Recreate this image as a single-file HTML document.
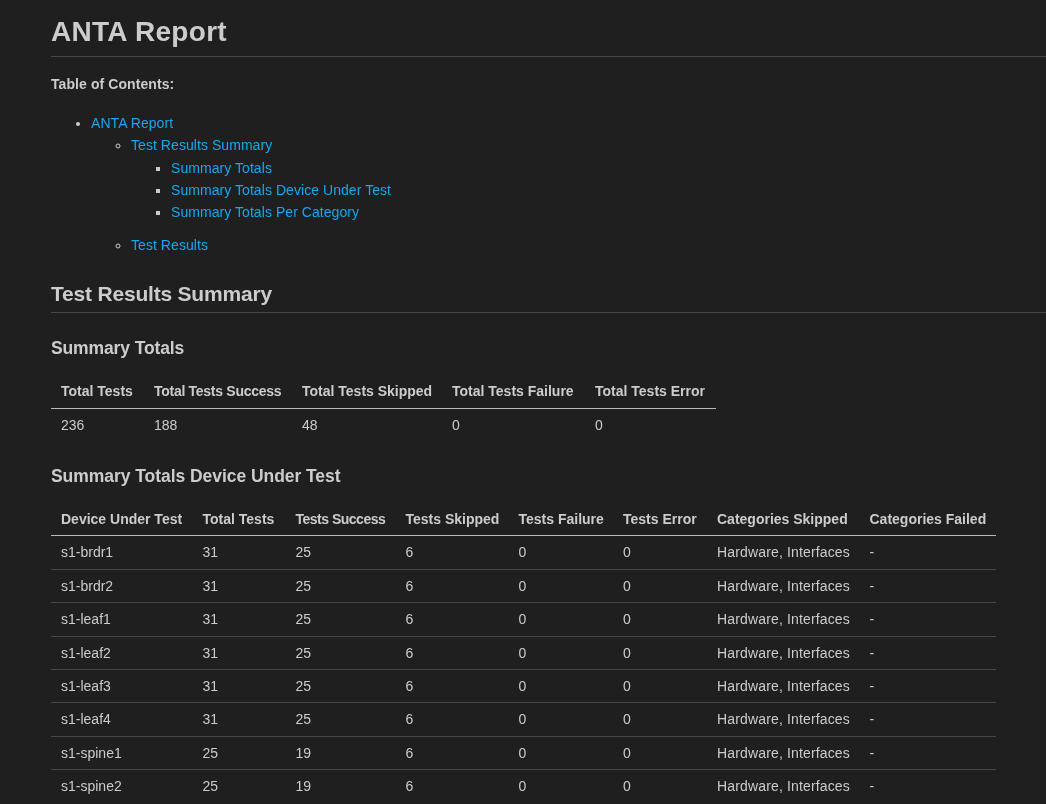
<!DOCTYPE html>
<html>
<head>
<meta charset="utf-8">
<style>
html, body {
  margin: 0;
  padding: 0;
  background: #1f1f1f;
  color: #cccccc;
  font-family: "Liberation Sans", sans-serif;
  font-size: 14px;
  line-height: 1.6;
  overflow: hidden;
}
body { padding: 13px 0 0 51px; width: 1100px; }
.wrap { will-change: transform; }
.sh { position: relative; top: 1px; }
h1, h2, h3, p, ul, pre { margin-top: 0; }
h1, h2, h3 { font-weight: bold; margin-top: 24px; margin-bottom: 16px; line-height: 1.25; }
h1 { font-size: 28px; margin-top: 0; padding-bottom: 8.4px; border-bottom: 1px solid #474747; }
h2 { font-size: 21px; padding-bottom: 6.3px; border-bottom: 1px solid #474747; }
h3 { font-size: 17.5px; }
p { margin-bottom: 16px; }
ul { margin-bottom: 9.8px; padding-left: 40px; }
a { color: #12a9f2; text-decoration: none; letter-spacing: 0.06px; }
table { border-collapse: collapse; margin-bottom: 9.8px; table-layout: fixed; }
th { text-align: left; border-bottom: 1px solid #bababa; }
th, td { padding: 5px 10px; white-space: nowrap; }
tbody tr + tr td { border-top: 1px solid #474747; }
</style>
</head>
<body>
<div class="wrap">
<h1><span class="sh" style="letter-spacing:0.3px">ANTA Report</span></h1>
<p><strong style="letter-spacing:0.08px">Table of Contents:</strong></p>
<ul>
<li><a>ANTA Report</a>
<ul>
<li><a>Test Results Summary</a>
<ul>
<li><a>Summary Totals</a></li>
<li><a>Summary Totals Device Under Test</a></li>
<li><a>Summary Totals Per Category</a></li>
</ul>
</li>
<li><a>Test Results</a></li>
</ul>
</li>
</ul>
<h2><span class="sh" style="letter-spacing:-0.2px">Test Results Summary</span></h2>
<h3><span class="sh" style="letter-spacing:-0.12px">Summary Totals</span></h3>
<table style="width:665px">
<colgroup><col style="width:93px"><col style="width:148px"><col style="width:150px"><col style="width:143px"><col style="width:131px"></colgroup>
<thead><tr><th>Total Tests</th><th style="letter-spacing:-0.28px">Total Tests Success</th><th>Total Tests Skipped</th><th>Total Tests Failure</th><th>Total Tests Error</th></tr></thead>
<tbody><tr><td>236</td><td>188</td><td>48</td><td>0</td><td>0</td></tr></tbody>
</table>
<h3><span class="sh" style="letter-spacing:-0.05px">Summary Totals Device Under Test</span></h3>
<table style="width:945px">
<colgroup><col style="width:141.5px"><col style="width:93px"><col style="width:110px"><col style="width:113px"><col style="width:104.5px"><col style="width:94px"><col style="width:152.5px"><col style="width:136.5px"></colgroup>
<thead><tr><th>Device Under Test</th><th>Total Tests</th><th style="letter-spacing:-0.5px">Tests Success</th><th>Tests Skipped</th><th>Tests Failure</th><th>Tests Error</th><th>Categories Skipped</th><th>Categories Failed</th></tr></thead>
<tbody>
<tr><td>s1-brdr1</td><td>31</td><td>25</td><td>6</td><td>0</td><td>0</td><td style="letter-spacing:0.15px">Hardware, Interfaces</td><td>-</td></tr>
<tr><td>s1-brdr2</td><td>31</td><td>25</td><td>6</td><td>0</td><td>0</td><td style="letter-spacing:0.15px">Hardware, Interfaces</td><td>-</td></tr>
<tr><td>s1-leaf1</td><td>31</td><td>25</td><td>6</td><td>0</td><td>0</td><td style="letter-spacing:0.15px">Hardware, Interfaces</td><td>-</td></tr>
<tr><td>s1-leaf2</td><td>31</td><td>25</td><td>6</td><td>0</td><td>0</td><td style="letter-spacing:0.15px">Hardware, Interfaces</td><td>-</td></tr>
<tr><td>s1-leaf3</td><td>31</td><td>25</td><td>6</td><td>0</td><td>0</td><td style="letter-spacing:0.15px">Hardware, Interfaces</td><td>-</td></tr>
<tr><td>s1-leaf4</td><td>31</td><td>25</td><td>6</td><td>0</td><td>0</td><td style="letter-spacing:0.15px">Hardware, Interfaces</td><td>-</td></tr>
<tr><td>s1-spine1</td><td>25</td><td>19</td><td>6</td><td>0</td><td>0</td><td style="letter-spacing:0.15px">Hardware, Interfaces</td><td>-</td></tr>
<tr><td>s1-spine2</td><td>25</td><td>19</td><td>6</td><td>0</td><td>0</td><td style="letter-spacing:0.15px">Hardware, Interfaces</td><td>-</td></tr>
</tbody>
</table>
</div>
</body>
</html>
